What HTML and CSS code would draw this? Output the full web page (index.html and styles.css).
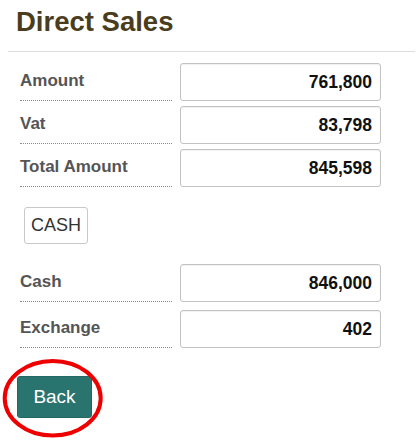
FILE: index.html
```html
<!DOCTYPE html>
<html lang="en">
<head>
<meta charset="utf-8">
<title>Direct Sales</title>
<link rel="stylesheet" href="styles.css">
</head>
<body>
<div class="page">
  <h1 class="title">Direct Sales</h1>
  <hr class="rule">
  <div class="form">
    <div class="group group-top">
      <div class="row">
        <div class="label">Amount</div>
        <input class="field" type="text" value="761,800" readonly>
      </div>
      <div class="row">
        <div class="label">Vat</div>
        <input class="field" type="text" value="83,798" readonly>
      </div>
      <div class="row">
        <div class="label">Total Amount</div>
        <input class="field" type="text" value="845,598" readonly>
      </div>
    </div>
    <div class="pay">
      <button class="btn-cash" type="button">CASH</button>
    </div>
    <div class="group group-bottom">
      <div class="row">
        <div class="label">Cash</div>
        <input class="field" type="text" value="846,000" readonly>
      </div>
      <div class="row">
        <div class="label">Exchange</div>
        <input class="field" type="text" value="402" readonly>
      </div>
    </div>
    <div class="footer">
      <button class="btn-back" type="button">Back</button>
    </div>
  </div>
  <svg class="highlight" width="110" height="88" viewBox="0 0 110 88" aria-hidden="true">
    <ellipse cx="52.7" cy="43.3" rx="48" ry="37.3" fill="none" stroke="#ee0000" stroke-width="4"/>
  </svg>
</div>
</body>
</html>
```
FILE: styles.css
```css
html, body {
  margin: 0;
  padding: 0;
  background: #ffffff;
}

body {
  font-family: "Liberation Sans", Arial, sans-serif;
}

.page {
  position: relative;
  padding: 0 3px 0 8px;
  height: 443px;
  box-sizing: border-box;
}

.title {
  margin: 0;
  padding: 6px 0 0 8px;
  font-size: 27.5px;
  line-height: 32px;
  font-weight: bold;
  color: #4a3d1d;
}

.rule {
  margin: 13px 0 0 0;
  border: 0;
  border-top: 1px solid #dddddd;
  height: 0;
}

.form {
  padding-left: 12px;
  margin-top: 11px;
}

.group {
  display: flex;
  flex-direction: column;
}

.group-top {
  gap: 5px;
}

.group-bottom {
  gap: 8px;
  margin-top: 20px;
}

.row {
  display: flex;
  gap: 8px;
}

.label {
  width: 152px;
  height: 38px;
  box-sizing: border-box;
  padding-top: 8px;
  border-bottom: 1px dotted #8a8a8a;
  font-size: 17px;
  line-height: 20px;
  font-weight: bold;
  color: #555555;
}

.field {
  width: 201px;
  height: 38px;
  box-sizing: border-box;
  margin: 0;
  padding: 0 8px 0 8px;
  border: 1px solid #c2c2c2;
  border-radius: 3px;
  box-shadow: inset 0 1px 1px rgba(0, 0, 0, 0.06);
  background: #ffffff;
  font-family: "Liberation Sans", Arial, sans-serif;
  font-size: 17.5px;
  font-weight: bold;
  color: #111111;
  text-align: right;
  outline: none;
}

.pay {
  margin-top: 20px;
  padding-left: 4px;
}

.btn-cash {
  display: flex;
  align-items: center;
  justify-content: center;
  height: 37px;
  box-sizing: border-box;
  margin: 0;
  padding: 0 6px;
  border: 1px solid #c8c8c8;
  border-radius: 3px;
  background: #ffffff;
  font-family: "Liberation Sans", Arial, sans-serif;
  font-size: 18px;
  color: #333333;
}

.footer {
  margin-top: 28px;
  margin-left: -3px;
}

.btn-back {
  display: flex;
  align-items: center;
  justify-content: center;
  width: 75px;
  height: 42px;
  box-sizing: border-box;
  margin: 0;
  padding: 0;
  border: 1px solid #246863;
  border-radius: 3px;
  background: #2a746f;
  font-family: "Liberation Sans", Arial, sans-serif;
  font-size: 19px;
  color: #ffffff;
}

.highlight {
  position: absolute;
  left: 0;
  top: 355px;
}
```
